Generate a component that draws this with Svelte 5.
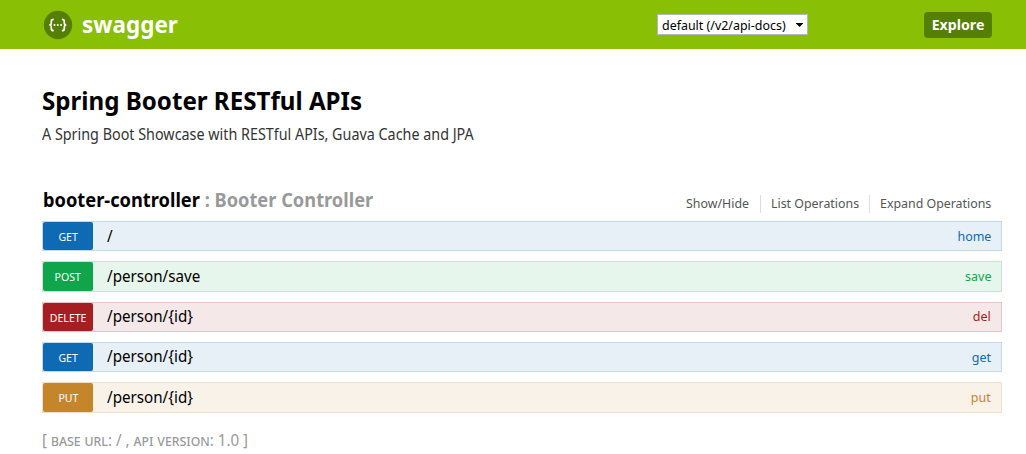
<script>
  const ops = [
    { method: 'GET', path: '/', nick: 'home', kind: 'get' },
    { method: 'POST', path: '/person/save', nick: 'save', kind: 'post' },
    { method: 'DELETE', path: '/person/{id}', nick: 'del', kind: 'delete' },
    { method: 'GET', path: '/person/{id}', nick: 'get', kind: 'get' },
    { method: 'PUT', path: '/person/{id}', nick: 'put', kind: 'put' }
  ];
</script>

<header>
  <a class="brand" href="#top">
    <svg width="30" height="30" viewBox="0 0 30 30">
      <circle cx="15" cy="15" r="14.2" fill="#547f00" />
      <g fill="none" stroke="#fff" stroke-width="1.7">
        <path d="M10.7 9.3c-2 0-2.4.7-2.4 2v1.6c0 1.3-.6 2-2 2.1c1.4.1 2 .8 2 2.1v1.6c0 1.3.4 2 2.4 2" />
        <path d="M18.9 9.3c2 0 2.4.7 2.4 2v1.6c0 1.3.6 2 2 2.1c-1.4.1-2 .8-2 2.1v1.6c0 1.3-.4 2-2.4 2" />
      </g>
      <g fill="#fff"><circle cx="11.5" cy="15" r="1.05" /><circle cx="14.8" cy="15" r="1.05" /><circle cx="18.1" cy="15" r="1.05" /></g>
    </svg>
    <span>swagger</span>
  </a>
  <div class="select"><span>default (/v2/api-docs)</span><svg width="7" height="4" viewBox="0 0 7 4"><path d="M0 0h7v.5L3.5 4L0 .5z" /></svg></div>
  <button>Explore</button>
</header>
<main>
  <h1>Spring Booter RESTful APIs</h1>
  <p class="desc">A Spring Boot Showcase with RESTful APIs, Guava Cache and JPA</p>
  <div class="heading">
    <h2><b>booter-controller</b> : Booter Controller</h2>
    <nav><a href="#a"><span>Show/Hide</span></a><a href="#b"><span>List Operations</span></a><a href="#c"><span>Expand Operations</span></a></nav>
  </div>
  <div class="ops">
    {#each ops as op}
      <div class="op {op.kind}">
        <span class="method"><span>{op.method}</span></span>
        <span class="path">{op.path}</span>
        <span class="nick">{op.nick}</span>
      </div>
    {/each}
  </div>
  <footer>[ <span>base url</span>: / , <span>api version</span>: 1.0 ]</footer>
</main>

<style>
  :global(body) { background: #fff; overflow: hidden; }
  header, main, button { font-family: "Noto Sans", "Open Sans", sans-serif; }
  header { height: 49px; background: #89bf04; display: flex; align-items: center; padding: 0 34px 0 43px; box-sizing: border-box; }
  .brand { display: flex; align-items: center; gap: 9px; width: 614px; color: #fff; text-decoration: none; font-size: 24px; font-weight: 700; line-height: 30px; }
  .brand span { transform-origin: left; transform: scaleX(.937); margin-top: -2px; }
  .select { display: flex; align-items: center; justify-content: space-between; width: 151px; height: 21px; box-sizing: border-box; border: 1px solid #b5b5bd; background: #fff; padding: 0 4px; font-size: 13px; color: #000; white-space: nowrap; }
  .select span { width: 124px; transform-origin: left; transform: scaleX(.957); }
  button { margin-left: auto; width: 68px; height: 26px; padding: 0; border: 0; border-radius: 4px; background: #547f00; color: #fff; font-size: 14.2px; font-weight: 700; }
  main { padding: 0 24px 0 42px; }
  h1, .desc, h2, footer, .path, nav span, .method span { transform-origin: left; }
  h1 { margin: 35px 0 0; font-size: 25px; line-height: 33px; transform: scaleX(.965); }
  .desc { margin: 8px 0 0; font-size: 15.4px; line-height: 20px; color: #333; transform: scaleX(.932); }
  .heading { margin-top: 42px; height: 34px; display: flex; justify-content: space-between; padding: 2px 0 0 1px; box-sizing: border-box; }
  h2 { margin: -2px 0 0; font-size: 19.2px; line-height: 26px; color: #999; transform: scaleX(.951); white-space: nowrap; }
  h2 b { color: #000; font-weight: 700; }
  nav { display: grid; grid-template-columns: 85px 109px 132px; padding-top: 6px; height: 18px; }
  nav a { font-size: 13px; line-height: 17px; color: #555; text-decoration: none; padding-left: 10px; border-right: 1px solid #ddd; white-space: nowrap; }
  nav a:last-child { border: 0; }
  nav span { display: inline-block; transform: scaleX(.952); }
  .ops { display: grid; gap: 9.95px; }
  .op { height: 30.4px; box-sizing: border-box; border: 1px solid; display: flex; align-items: center; padding-right: 10px; }
  .method { align-self: stretch; width: 50px; line-height: 30px; color: #fff; font-size: 11px; text-align: center; border-radius: 2px; }
  .method span { display: inline-block; transform-origin: center; transform: scaleX(.96); }
  .path { margin: -1.4px 0 0 14px; font-size: 16px; color: #000; transform: scaleX(.948); }
  .nick { margin: -.8px 0 0 auto; font-size: 13px; transform-origin: right; transform: scaleX(.96); }
  .get { background: #e7f0f7; border-color: #c3d9ec; color: #0f6ab4; }
  .get .method { background: #0f6ab4; }
  .post { background: #e7f6ec; border-color: #c3e8d1; color: #10a54a; }
  .post .method { background: #10a54a; }
  .delete { background: #f5e8e8; border-color: #e8c6c7; color: #a41e22; }
  .delete .method { background: #a41e22; }
  .put { background: #f9f2e9; border-color: #f0e0ca; color: #c5862b; }
  .put .method { background: #c5862b; }
  footer { margin-top: 17px; font-size: 16px; line-height: 20px; color: #999; transform: scaleX(.947); }
  footer span { font-variant: small-caps; }
</style>
